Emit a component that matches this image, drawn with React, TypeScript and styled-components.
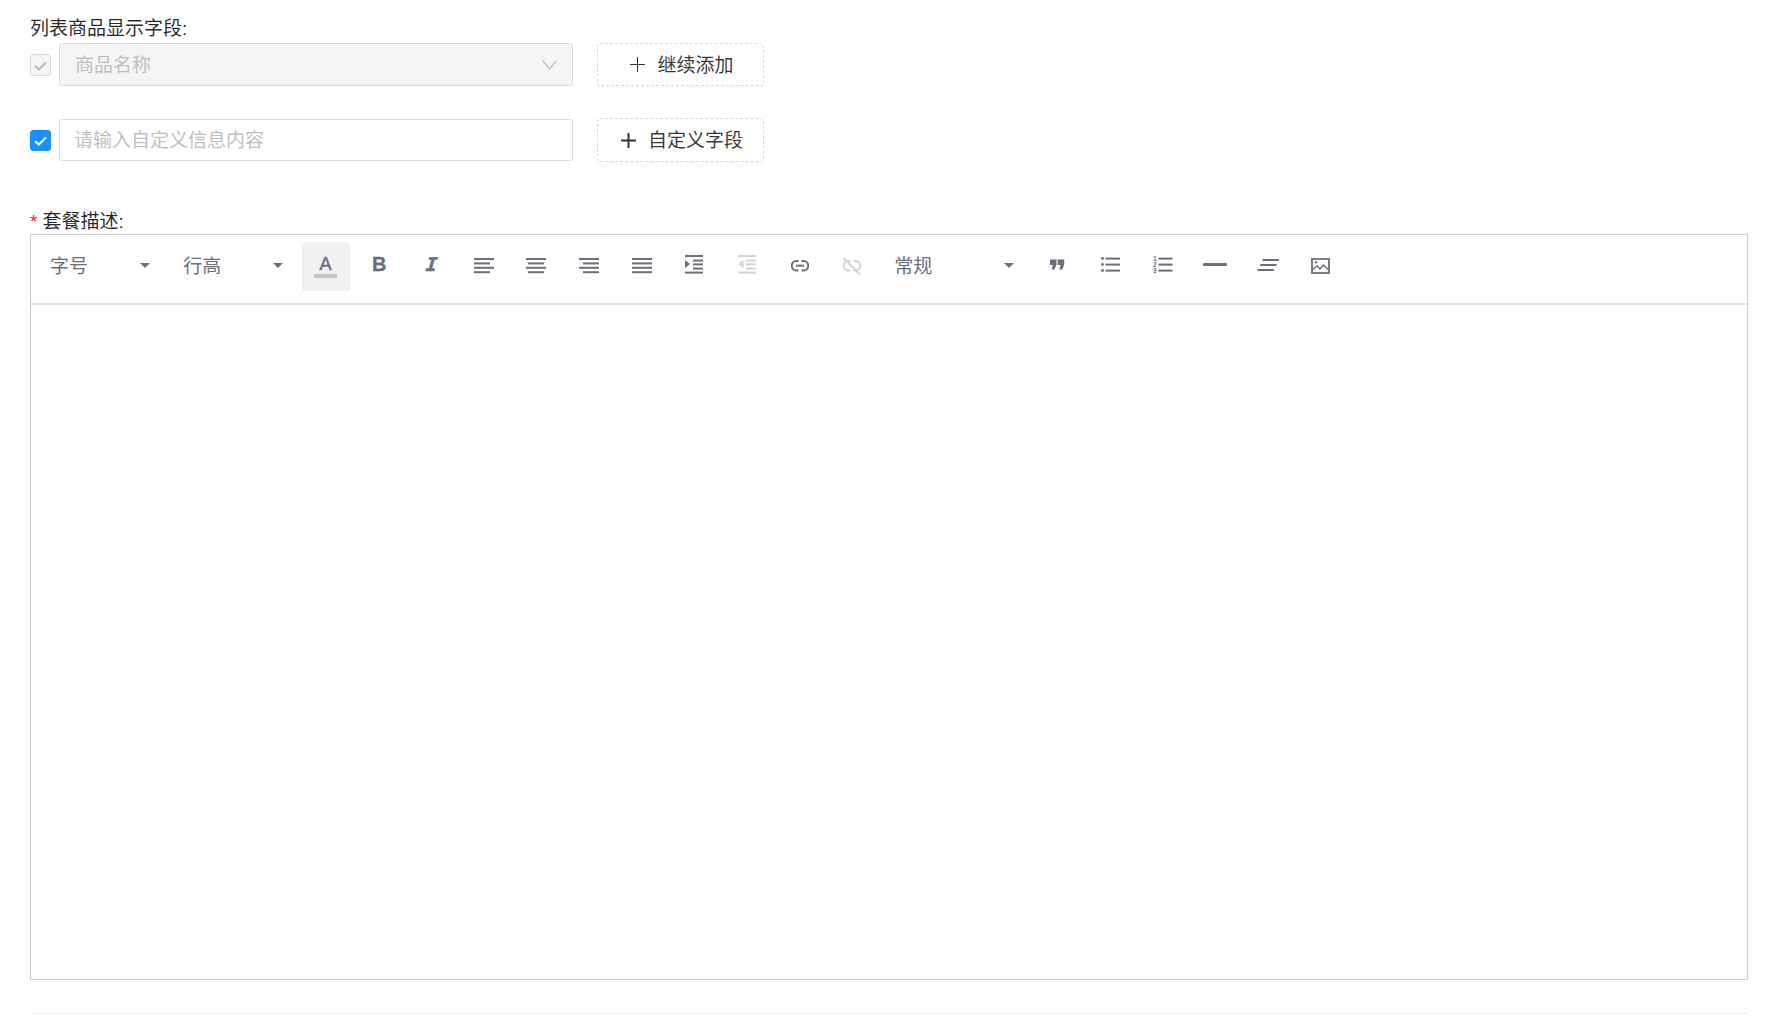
import React from "react";
import styled, { createGlobalStyle } from "styled-components";

const Global = createGlobalStyle`
  html, body { margin: 0; padding: 0; background: #fff; }
  body { font-family: "Liberation Sans", "Noto Sans CJK SC", sans-serif; font-size: 19px; color: rgba(0,0,0,.85); }
  * { box-sizing: border-box; }
`;

const Page = styled.div`
  width: 1780px;
  height: 1029px;
  overflow: hidden;
  padding: 16px 32px 0 30px;
`;
const FieldLabel = styled.div<{ $height: number; $top?: number; $down?: number }>`
  height: ${(p) => p.$height}px;
  margin-top: ${(p) => p.$top ?? 0}px;
  padding-top: ${(p) => p.$down ?? 0}px;
  line-height: 26px;
  font-size: 19px;
  white-space: nowrap;
`;
const Star = styled.span`
  color: #f5222d;
  margin-right: 5px;
`;
const Row = styled.div<{ $height: number; $top: number }>`
  display: flex;
  align-items: center;
  height: ${(p) => p.$height}px;
  margin-top: ${(p) => p.$top}px;
`;
const Check = styled.span<{ $disabled?: boolean }>`
  width: 21px;
  height: 21.5px;
  margin-top: 1px;
  margin-right: 8px;
  flex: none;
  display: flex;
  align-items: center;
  justify-content: center;
  border-radius: 3px;
  border: 1px solid ${(p) => (p.$disabled ? "#d9d9d9" : "#1890ff")};
  background: ${(p) => (p.$disabled ? "#f5f5f5" : "#1890ff")};
  color: ${(p) => (p.$disabled ? "#b8b8b8" : "#fff")};
`;
const SelectBox = styled.div`
  width: 514px;
  height: 43px;
  flex: none;
  display: flex;
  align-items: center;
  justify-content: space-between;
  padding: 0 15px;
  background: #f5f5f5;
  border: 1.33px solid #d9d9d9;
  border-radius: 3px;
  color: #bfbfbf;
  font-size: 19px;
`;
const ShiftedText = styled.span`
  margin-top: -3px;
`;
const ToolText = styled.span`
  margin-top: -4px;
`;
const TextInput = styled.input`
  width: 514px;
  height: 42px;
  flex: none;
  padding: 2px 14px 0;
  background: #fff;
  border: 1.33px solid #d9d9d9;
  border-radius: 3px;
  outline: none;
  font: inherit;
  font-size: 19px;
  &::placeholder { color: #bfbfbf; opacity: 1; }
`;
const DashedButton = styled.button`
  width: 167px;
  height: 100%;
  flex: none;
  margin-left: 24px;
  padding: 0 0 0 3px;
  display: flex;
  align-items: center;
  justify-content: center;
  gap: 12px;
  background: #fff;
  border: 1.33px dashed #d9d9d9;
  border-radius: 3px;
  box-shadow: 0 2.6px 0 rgba(0, 0, 0, 0.015);
  font: inherit;
  font-size: 19px;
  color: rgba(0, 0, 0, 0.8);
`;
const Editor = styled.div`
  width: 1718px;
  height: 746px;
  border: 1px solid #ccc;
`;
const Toolbar = styled.div`
  height: 70px;
  display: flex;
  align-items: flex-start;
  gap: 4.67px;
  padding: 7px 0 0 4px;
  border-bottom: 2px solid #e0e0e0;
`;
const ToolSelect = styled.div<{ $width: number; $left?: number }>`
  width: ${(p) => p.$width}px;
  height: 49px;
  flex: none;
  display: flex;
  align-items: center;
  justify-content: space-between;
  padding: 0 14px 0 ${(p) => p.$left ?? 15}px;
  color: #6a6f7b;
  font-size: 19px;
`;
const Caret = styled.i`
  width: 0;
  height: 0;
  margin-top: -3px;
  border-left: 5px solid transparent;
  border-right: 5px solid transparent;
  border-top: 5.5px solid #6a6f7b;
`;
const ToolButton = styled.div<{ $active?: boolean; $disabled?: boolean }>`
  width: 48px;
  height: 49px;
  flex: none;
  display: flex;
  align-items: center;
  justify-content: center;
  border-radius: 3px;
  background: ${(p) => (p.$active ? "#f1f1f1" : "transparent")};
  color: ${(p) => (p.$disabled ? "#d2d3d6" : "#6a6f7b")};
`;
const GlyphA = styled.span`
  font-family: "Liberation Sans", sans-serif;
  font-size: 18px;
  line-height: 18px;
  margin-top: -1px;
  padding-bottom: 1px;
  border-bottom: 4px solid #c4c4c4;
  width: 23px;
  text-align: center;
  -webkit-text-stroke: 0.5px #6a6f7b;
`;
const GlyphB = styled.span`
  font-family: "Liberation Sans", sans-serif;
  font-weight: 700;
  font-size: 20px;
  line-height: 20px;
  margin: -5px 0 0 2px;
  -webkit-text-stroke: 0.3px #6a6f7b;
`;
const GlyphI = styled.span`
  font-family: "DejaVu Sans Mono", monospace;
  font-weight: 700;
  font-style: normal;
  font-size: 19px;
  line-height: 20px;
  margin: -5px 0 0 1px;
  transform: skewX(-16deg);
  -webkit-text-stroke: 0.5px #6a6f7b;
`;
const Divider = styled.div`
  width: 1718px;
  height: 1px;
  margin-top: 33px;
  background: #eee;
`;
const OlNumber = styled.text`
  font-family: "Liberation Sans", sans-serif;
  font-size: 6.5px;
  font-weight: 700;
  fill: currentColor;
`;
const IconSvg = styled.svg`
  margin-top: -3px;
`;

const Icon = ({ children }: { children: React.ReactNode }) => (
  <IconSvg width="24" height="24" viewBox="0 0 24 24" fill="currentColor">
    {children}
  </IconSvg>
);
const Lines = ({ rows }: { rows: [number, number][] }) => (
  <Icon>
    {rows.map(([x, w], i) => (
      <rect key={i} x={x} y={5 + i * 4.4} width={w} height={2} />
    ))}
  </Icon>
);
const Indent = ({ out }: { out?: boolean }) => (
  <Icon>
    <rect x="3" y="2" width="18" height="2" />
    <rect x="3" y="18.6" width="18" height="2" />
    <rect x="11" y="6.6" width="10" height="2" />
    <rect x="11" y="10.4" width="10" height="2" />
    <rect x="11" y="14.6" width="10" height="2" />
    {out ? <path d="M8.5 7v8L3.5 11z" /> : <path d="M3 7v8l5-4z" />}
  </Icon>
);
const LinkShape = () => (
  <path
    d="M10.5 8H8.5a4.5 4.5 0 0 0 0 9.5h2M13.5 8h2a4.5 4.5 0 0 1 0 9.5h-2"
    fill="none"
    stroke="currentColor"
    strokeWidth="2"
  />
);
const Plus = ({ weight }: { weight: number }) => (
  <svg width="15" height="15" viewBox="0 0 15 15" stroke="currentColor" strokeWidth={weight}>
    <path d="M0 7.5h15M7.5 0v15" />
  </svg>
);
const Tick = ({ weight }: { weight: number }) => (
  <svg width="15" height="15" viewBox="0 0 15 15" fill="none" stroke="currentColor" strokeWidth={weight}>
    <path d="M2 8l3.8 3.5L13 4.5" />
  </svg>
);

export default function App() {
  return (
    <Page>
      <Global />
      <FieldLabel $height={27}>列表商品显示字段:</FieldLabel>
      <Row $height={43} $top={0}>
        <Check $disabled>
          <Tick weight={2} />
        </Check>
        <SelectBox>
          <ShiftedText>商品名称</ShiftedText>
          <svg width="15" height="10" viewBox="0 0 15 10" fill="none" stroke="#bdbdbd" strokeWidth="1.2">
            <path d="M.6.6l6.9 8.4L14.4.6" />
          </svg>
        </SelectBox>
        <DashedButton>
          <Plus weight={1} />
          <ShiftedText>继续添加</ShiftedText>
        </DashedButton>
      </Row>
      <Row $height={44} $top={32}>
        <Check>
          <Tick weight={2.2} />
        </Check>
        <TextInput placeholder="请输入自定义信息内容" />
        <DashedButton>
          <Plus weight={2} />
          <ShiftedText>自定义字段</ShiftedText>
        </DashedButton>
      </Row>
      <FieldLabel $height={26} $top={46} $down={1}>
        <Star>*</Star>套餐描述:
      </FieldLabel>
      <Editor>
        <Toolbar>
          <ToolSelect $width={128.67}>
            <ToolText>字号</ToolText>
            <Caret />
          </ToolSelect>
          <ToolSelect $width={128.67}>
            <ToolText>行高</ToolText>
            <Caret />
          </ToolSelect>
          <ToolButton $active>
            <GlyphA>A</GlyphA>
          </ToolButton>
          <ToolButton>
            <GlyphB>B</GlyphB>
          </ToolButton>
          <ToolButton>
            <GlyphI>I</GlyphI>
          </ToolButton>
          <ToolButton>
            <Lines rows={[[2, 20], [2, 16], [2, 20], [2, 16]]} />
          </ToolButton>
          <ToolButton>
            <Lines rows={[[2, 20], [4, 16], [2, 20], [4, 16]]} />
          </ToolButton>
          <ToolButton>
            <Lines rows={[[2, 20], [6, 16], [2, 20], [6, 16]]} />
          </ToolButton>
          <ToolButton>
            <Lines rows={[[2, 20], [2, 20], [2, 20], [2, 20]]} />
          </ToolButton>
          <ToolButton>
            <Indent />
          </ToolButton>
          <ToolButton $disabled>
            <Indent out />
          </ToolButton>
          <ToolButton>
            <Icon>
              <LinkShape />
              <rect x="8" y="11.7" width="8" height="2" />
            </Icon>
          </ToolButton>
          <ToolButton $disabled>
            <Icon>
              <LinkShape />
              <path d="M3.5 5L20 21.5" fill="none" stroke="currentColor" strokeWidth="1.8" />
            </Icon>
          </ToolButton>
          <ToolSelect $width={147.6} $left={13.5}>
            <ToolText>常规</ToolText>
            <Caret />
          </ToolSelect>
          <ToolButton>
            <Icon>
              <path d="M5 6.5h6.5v5L9.5 16.5H6.5l1.5-4.5H5zM12.7 6.5h6.5v5l-2 5h-3l1.5-4.5h-3z" />
            </Icon>
          </ToolButton>
          <ToolButton>
            <Icon>
              <circle cx="4.5" cy="5.5" r="1.4" />
              <circle cx="4.5" cy="11.5" r="1.4" />
              <circle cx="4.5" cy="17.5" r="1.4" />
              <rect x="7.5" y="4.6" width="14.5" height="2" />
              <rect x="7.5" y="10.6" width="14.5" height="2" />
              <rect x="7.5" y="16.6" width="14.5" height="2" />
            </Icon>
          </ToolButton>
          <ToolButton>
            <Icon>
              <OlNumber x="3" y="7.5">1</OlNumber>
              <OlNumber x="3" y="14">2</OlNumber>
              <OlNumber x="3" y="20">3</OlNumber>
              <rect x="8.5" y="4.6" width="14" height="2" />
              <rect x="8.5" y="10.6" width="14" height="2" />
              <rect x="8.5" y="16.6" width="14" height="2" />
            </Icon>
          </ToolButton>
          <ToolButton>
            <Icon>
              <rect x="0" y="10" width="24" height="3" rx="1" />
            </Icon>
          </ToolButton>
          <ToolButton>
            <Icon>
              <path d="M6.8 6h16.4l-.6 2H6.2zM4.5 11h16.4l-.6 2H3.9zM1.8 16h16.4l-.6 2H1.2z" />
            </Icon>
          </ToolButton>
          <ToolButton>
            <Icon>
              <rect x="4" y="6" width="17" height="14" fill="none" stroke="currentColor" strokeWidth="1.8" />
              <circle cx="8" cy="9.3" r="1.2" />
              <path d="M4.5 17l4.5-4 3 3 3.5-4 5 5" fill="none" stroke="currentColor" strokeWidth="1.3" />
            </Icon>
          </ToolButton>
        </Toolbar>
      </Editor>
      <Divider />
    </Page>
  );
}
